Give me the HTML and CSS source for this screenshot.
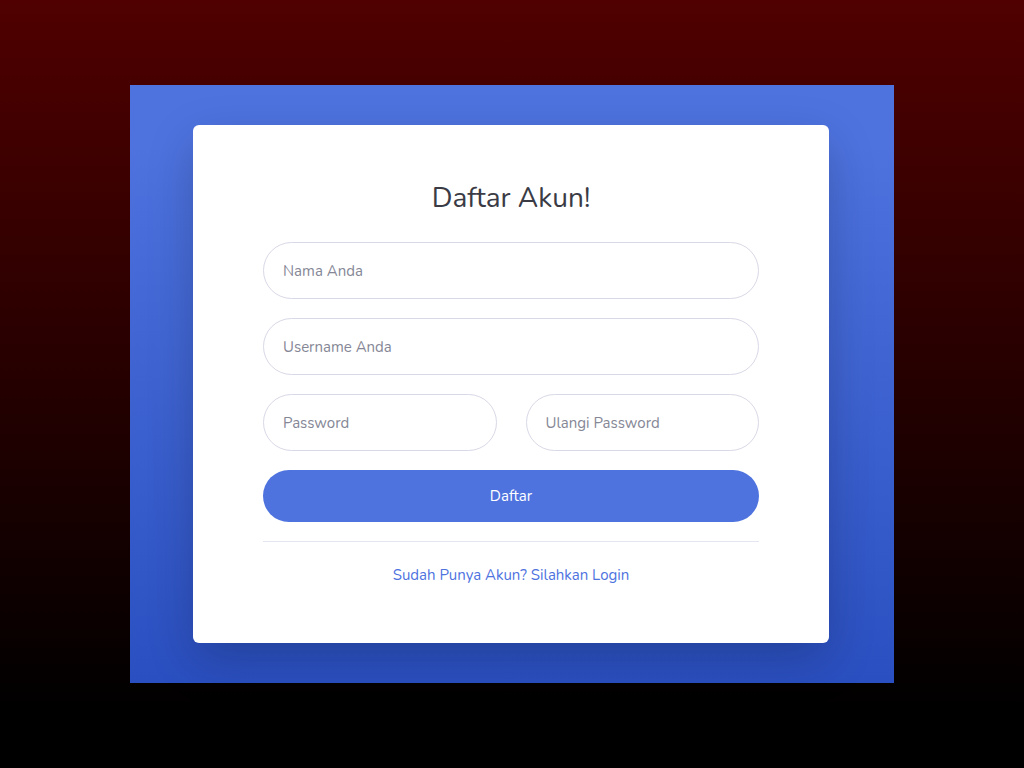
FILE: index.html
```html
<!DOCTYPE html>
<html lang="id">
<head>
<meta charset="utf-8">
<title>Daftar Akun</title>
<link rel="stylesheet" href="styles.css">
</head>
<body>
<div class="panel">
  <div class="card">
    <h1 class="title">Daftar Akun!</h1>
    <form class="form">
      <input class="field" type="text" placeholder="Nama Anda">
      <input class="field" type="text" placeholder="Username Anda">
      <div class="row">
        <input class="field" type="password" placeholder="Password">
        <input class="field" type="password" placeholder="Ulangi Password">
      </div>
      <button class="btn" type="button">Daftar</button>
    </form>
    <hr class="divider">
    <div class="footer"><a class="link" href="#">Sudah Punya Akun? Silahkan Login</a></div>
  </div>
</div>
</body>
</html>
```
FILE: styles.css
```css
* { box-sizing: border-box; }
html, body { margin: 0; height: 100%; }
body {
  background: linear-gradient(180deg, #500000 0%, #000000 93%);
  font-family: "Nunito", "Lato", "Noto Sans", sans-serif;
  display: flex;
  justify-content: center;
  align-items: flex-start;
  padding-top: 85px;
}
.panel {
  width: 764px;
  height: 598px;
  padding: 40px 65px 40px 63px;
  background: linear-gradient(180deg, #4e73df 10%, #2a4fc0 100%);
  display: flex;
}
.card {
  width: 636px;
  height: 518px;
  background: #fff;
  border-radius: 6px;
  box-shadow: 0 16px 48px rgba(0, 0, 0, 0.2);
  padding: 55px 70px 0;
}
.title {
  margin: 0 0 26px;
  font-size: 28px;
  line-height: 36px;
  font-weight: 400;
  color: #3a3b45;
  text-align: center;
}
.form {
  display: flex;
  flex-direction: column;
  gap: 19px;
}
.row {
  display: grid;
  grid-template-columns: 1fr 1fr;
  gap: 29px;
}
.field {
  height: 57px;
  width: 100%;
  border: 1px solid #d8d9e6;
  border-radius: 160px;
  padding: 0 19px;
  font-family: inherit;
  font-size: 15px;
  color: #6e707e;
  outline: none;
  background: #fff;
}
.field::placeholder { color: #858796; }
.btn {
  height: 52px;
  border: none;
  border-radius: 160px;
  background: #4e73df;
  color: #fff;
  font-family: inherit;
  font-size: 15px;
}
.divider {
  margin: 19px 0 0;
  border: 0;
  border-top: 1px solid #e3e6f0;
}
.footer {
  text-align: center;
  margin-top: 22px;
  font-size: 15px;
  line-height: 22px;
}
.link {
  color: #4e73df;
  text-decoration: none;
}
```
